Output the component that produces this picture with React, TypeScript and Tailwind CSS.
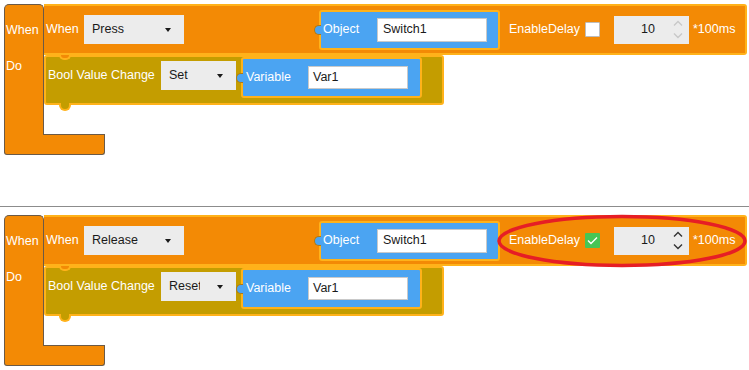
import React from "react";

const Chevron = ({ up, color }: { up?: boolean; color: string }) => (
  <svg width="10" height="6" viewBox="0 0 10 6">
    <polyline
      points={up ? "1,5.5 5,1.5 9,5.5" : "1,0.5 5,4.5 9,0.5"}
      fill="none"
      stroke={color}
      strokeWidth="1.4"
    />
  </svg>
);

const Arrow = () => (
  <div className="w-0 h-0 border-l-[3.5px] border-r-[3.5px] border-t-[4px] border-l-transparent border-r-transparent border-t-[#1a1a1a]" />
);

const Dropdown = ({ text, wide }: { text: string; wide?: boolean }) => (
  <div
    className={
      wide
        ? "flex items-center justify-between bg-[#ececec] w-[100px] h-[29px] pl-[8px] pr-[13px] text-[#1a1a1a]"
        : "flex items-center justify-between bg-[#ececec] w-[75px] h-[29px] pl-[8px] pr-[13px] text-[#1a1a1a]"
    }
  >
    <span className={wide ? "whitespace-nowrap" : "w-[31px] overflow-hidden whitespace-nowrap"}>{text}</span>
    <Arrow />
  </div>
);

const Notch = () => (
  <div className="absolute -left-[7px] top-1/2 -translate-y-1/2 w-[7px] h-[10px] rounded-l-full bg-[#4ba4f2] border border-r-0 border-[#b07a14]" />
);

const ObjectBlock = () => (
  <div className="relative flex items-center bg-[#4ba4f2] border-2 border-[#ffb21a] rounded-[3px] w-[181px] h-[40px]">
    <Notch />
    <span className="pl-[2px] w-[56px] text-white">Object</span>
    <div className="w-[110px] h-[24px] bg-white border border-[#c9c9c9] pl-[5px] flex items-center text-[#1a1a1a]">
      Switch1
    </div>
  </div>
);

const VariableBlock = () => (
  <div className="relative flex items-center bg-[#4ba4f2] border-2 border-[#ffb21a] rounded-[3px] w-[181px] h-[41px]">
    <Notch />
    <span className="pl-[3px] w-[65px] text-white">Variable</span>
    <div className="w-[100px] h-[23px] bg-white border border-[#c9c9c9] pl-[4px] flex items-center text-[#1a1a1a]">
      Var1
    </div>
  </div>
);

const Block = ({ bottom }: { bottom?: boolean }) => (
  <div className="flex items-start">
    {/* L shape */}
    <div className="w-[40px] flex flex-col">
      <div className="w-[40px] h-[130px] bg-[#f38a05] border-l border-t border-r border-[#6b5a47] rounded-t-[5px] text-white">
        <div className="h-[50px] flex items-center pl-[1px]">When</div>
        <div className="pt-[4px] leading-[15px] pl-[1px]">Do</div>
      </div>
      <div className="w-[101px] h-[21px] bg-[#f38a05] border-l border-r border-b border-[#6b5a47] rounded-b-[3px]">
        <div className="ml-[38px] border-t border-[#6b5a47]" />
      </div>
    </div>

    <div className="flex flex-col w-[703px]">
      {/* header */}
      <div className="h-[51px] bg-[#f38a05] border-t-2 border-b-2 border-r-2 border-[#ffb21a] rounded-r-[3px] flex items-center text-white">
        <span className="ml-[2px] w-[38px]">When</span>
        <Dropdown text={bottom ? "Release" : "Press"} wide />
        <div className="ml-[135px]">
          <ObjectBlock />
        </div>
        <span className="ml-[9px] w-[76px]">EnableDelay</span>
        {bottom ? (
          <div className="w-[15px] h-[15px] bg-[#46c555] rounded-[1px] flex items-center justify-center">
            <svg width="11" height="9" viewBox="0 0 11 9">
              <polyline points="1,4.5 4,7.5 10,1.5" fill="none" stroke="white" strokeWidth="1.4" />
            </svg>
          </div>
        ) : (
          <div className="w-[15px] h-[15px] bg-white border border-[#bdbdbd] rounded-[1px]" />
        )}
        <div className="ml-[14px] w-[75px] h-[28px] bg-[#ececec] flex items-center text-[#1a1a1a]">
          <span className="pl-[27px] w-[59px]">10</span>
          <div className="flex flex-col gap-[7px]">
            <Chevron up color={bottom ? "#333333" : "#c8c8c8"} />
            <Chevron color={bottom ? "#333333" : "#c8c8c8"} />
          </div>
        </div>
        <span className="ml-[4px]">*100ms</span>
      </div>

      {/* do block */}
      <div className="relative w-[400px] h-[50px] bg-[#c49d00] border-2 border-[#ffb21a] rounded-[3px] flex items-start">
        <div className="absolute -top-[2px] left-[13px] w-[12px] h-[5px] rounded-b-full bg-[#f38a05] border-2 border-t-0 border-[#ffb21a]" />
        <div className="absolute -bottom-[8px] left-[13px] w-[12px] h-[8px] rounded-b-full bg-[#c49d00] border-2 border-t-0 border-[#ffb21a]" />
        <span className="pl-[2px] w-[115px] mt-[4px] h-[29px] flex items-center text-white whitespace-nowrap">
          Bool Value Change
        </span>
        <div className="mt-[4px]">
          <Dropdown text={bottom ? "Reset" : "Set"} />
        </div>
        <div className="ml-[5px]">
          <VariableBlock />
        </div>
      </div>
    </div>
  </div>
);

export default function App() {
  return (
    <div className="relative w-[749px] h-[370px] bg-white overflow-hidden font-['Liberation_Sans',Arial,sans-serif] text-[12.5px]">
      <div className="pt-[4px] pl-[4px]">
        <Block />
      </div>
      <div className="mt-[51px] h-px bg-[#8c8c8c]" />
      <div className="pt-[8px] pl-[4px]">
        <Block bottom />
      </div>
      <svg className="absolute left-0 top-0 pointer-events-none" width="749" height="370">
        <ellipse cx="622" cy="241" rx="123" ry="24.5" fill="none" stroke="#e61e25" strokeWidth="3.5" />
      </svg>
    </div>
  );
}
